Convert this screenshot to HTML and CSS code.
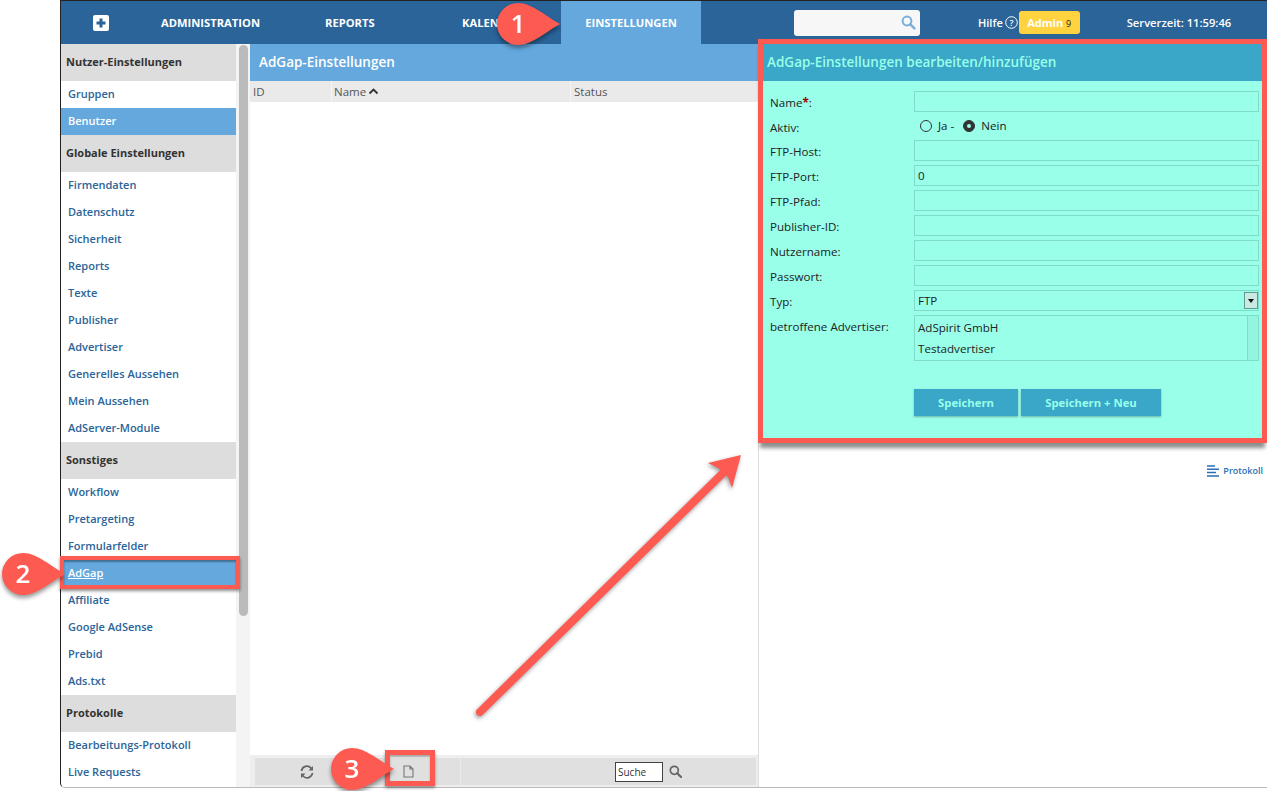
FILE: index.html
```html
<!DOCTYPE html>
<html lang="de">
<head>
  <meta charset="utf-8" />
  <title>AdGap-Einstellungen</title>
  <link rel="stylesheet" href="styles.css">
</head>
<body>
  <div class="window">
    <header class="topnav">
      <div class="nav-add">
        <svg width="16" height="16" viewBox="0 0 16 16"><rect width="16" height="16" rx="2" fill="#fff"/><path d="M8 3.500v9M3.500 8h9" stroke="#2a6499" stroke-width="3"/></svg>
      </div>
      <a class="nav-item nav-admin">ADMINISTRATION</a>
      <a class="nav-item nav-reports">REPORTS</a>
      <a class="nav-item nav-kalender">KALEN</a>
      <a class="nav-item nav-active">EINSTELLUNGEN</a>
      <div class="nav-search">
        <svg width="15" height="15" viewBox="0 0 15 15"><circle cx="6" cy="6" r="4.400" fill="none" stroke="#78aedd" stroke-width="2"/><path d="M9.400 9.400l4 4" stroke="#78aedd" stroke-width="2.400" stroke-linecap="round"/></svg>
      </div>
      <span class="nav-help">Hilfe
        <svg width="13" height="13" viewBox="0 0 13 13"><circle cx="6.500" cy="6.500" r="5.800" fill="none" stroke="#fff"/><text x="6.500" y="9.800" text-anchor="middle" class="help-mark">?</text></svg>
      </span>
      <span class="nav-badge">Admin <small>9</small></span>
      <span class="nav-time">Serverzeit: 11:59:46</span>
    </header>

    <div class="main">
      <aside class="sidebar">
        <nav class="side-list">
          <h4>Nutzer-Einstellungen</h4>
          <a>Gruppen</a>
          <a class="on">Benutzer</a>
          <h4>Globale Einstellungen</h4>
          <a>Firmendaten</a>
          <a>Datenschutz</a>
          <a>Sicherheit</a>
          <a>Reports</a>
          <a>Texte</a>
          <a>Publisher</a>
          <a>Advertiser</a>
          <a>Generelles Aussehen</a>
          <a>Mein Aussehen</a>
          <a>AdServer-Module</a>
          <h4>Sonstiges</h4>
          <a>Workflow</a>
          <a>Pretargeting</a>
          <a>Formularfelder</a>
          <a class="on marked"><u>AdGap</u></a>
          <a>Affiliate</a>
          <a>Google AdSense</a>
          <a>Prebid</a>
          <a>Ads.txt</a>
          <h4>Protokolle</h4>
          <a>Bearbeitungs-Protokoll</a>
          <a>Live Requests</a>
        </nav>
        <div class="side-scroll"><div class="side-thumb"></div></div>
      </aside>

      <section class="listing">
        <h3 class="panel-title">AdGap-Einstellungen</h3>
        <div class="table-head">
          <span class="col-id">ID</span>
          <span class="col-name">Name
            <svg width="11" height="7" viewBox="0 0 11 7"><path d="M1.500 5.500l4-4 4 4" fill="none" stroke="#333" stroke-width="1.800"/></svg>
          </span>
          <span class="col-status">Status</span>
        </div>
        <div class="table-body"></div>
        <div class="toolbar">
          <div class="tool tool-refresh">
            <svg width="14" height="14" viewBox="0 0 14 14"><path d="M1.500 6A5.500 5.500 0 0 1 11 3l1.500 1.500M12.500 8A5.500 5.500 0 0 1 3 11l-1.500-1.500" fill="none" stroke="#666" stroke-width="1.800"/><path d="M13 1v4.500H8.500zM1 13V8.500h4.500z" fill="#666"/></svg>
          </div>
          <div class="tool tool-new">
            <svg width="11" height="13" viewBox="0 0 11 13"><path d="M1 1h6l3 3v8H1zM7 1v3h3" fill="none" stroke="#777" stroke-width="1.100"/></svg>
          </div>
          <div class="tool tool-search">
            <span class="search-box">Suche</span>
            <svg width="13" height="13" viewBox="0 0 13 13"><circle cx="5.300" cy="5.300" r="4" fill="none" stroke="#666" stroke-width="1.700"/><path d="M8.300 8.300l3.700 3.700" stroke="#666" stroke-width="2.200" stroke-linecap="round"/></svg>
          </div>
        </div>
      </section>

      <section class="detail">
        <div class="edit-panel">
          <h3 class="panel-title">AdGap-Einstellungen bearbeiten/hinzufügen</h3>
          <div class="form">
            <label>Name<b>*</b>:</label><span class="field"></span>
            <label>Aktiv:</label>
            <div class="radios">
              <i class="radio"></i><span>Ja -</span>
              <i class="radio checked"></i><span>Nein</span>
            </div>
            <label>FTP-Host:</label><span class="field"></span>
            <label>FTP-Port:</label><span class="field field-port">0</span>
            <label>FTP-Pfad:</label><span class="field"></span>
            <label>Publisher-ID:</label><span class="field"></span>
            <label>Nutzername:</label><span class="field"></span>
            <label>Passwort:</label><span class="field"></span>
            <label>Typ:</label>
            <span class="field field-select">FTP<i class="select-btn"></i></span>
            <label>betroffene Advertiser:</label>
            <div class="multi">
              <div class="multi-items"><span>AdSpirit GmbH</span><span>Testadvertiser</span></div>
              <div class="multi-scroll"></div>
            </div>
          </div>
          <div class="actions">
            <button class="btn btn-save">Speichern</button>
            <button class="btn btn-new">Speichern + Neu</button>
          </div>
        </div>
        <a class="protokoll">
          <svg width="13" height="12" viewBox="0 0 13 12"><path d="M0 1h8M0 4.300h12M0 7.600h9M0 11h12" stroke="#2a6fb5" stroke-width="1.500"/></svg>
          Protokoll
        </a>
      </section>
    </div>
  </div>

  <!-- annotations over the screenshot -->
  <div class="tool-mark"></div>
  <div class="callout callout-1">
    <svg width="64" height="42" viewBox="0 0 64 42"><path d="M21 0C35 0 50 14 63 21 50 28 35 42 21 42A21 21 0 0 1 21 0z" fill="#fd5a52"/></svg>
    <span>1</span>
  </div>
  <div class="callout callout-2">
    <svg width="64" height="42" viewBox="0 0 64 42"><path d="M21 0C35 0 50 14 63 21 50 28 35 42 21 42A21 21 0 0 1 21 0z" fill="#fd5a52"/></svg>
    <span>2</span>
  </div>
  <div class="callout callout-3">
    <svg width="64" height="42" viewBox="0 0 64 42"><path d="M21 0C35 0 50 14 63 21 50 28 35 42 21 42A21 21 0 0 1 21 0z" fill="#fd5a52"/></svg>
    <span>3</span>
  </div>
  <svg class="big-arrow" width="290" height="270" viewBox="0 0 290 270">
    <path d="M10 262L253 23" stroke="#fd5a52" stroke-width="8" stroke-linecap="round"/>
    <path d="M271 5L238 13 248 18 258 27 262 38z" fill="#fd5a52"/>
  </svg>
</body>
</html>
```

FILE: styles.css
```css
* { box-sizing: border-box; }
html, body { margin: 0; height: 100%; background: #fff; overflow: hidden; }
body { font-family: "Open Sans", "Liberation Sans", sans-serif; font-size: 12px; color: #333; }
a { display: block; text-decoration: none; }

.window {
  margin-left: 60px; height: 788px; display: flex; flex-direction: column;
  border-left: 1px solid #222; border-top: 1px solid #222;
  border-bottom: 1px solid #bbb; border-bottom-left-radius: 5px;
}

/* top navigation */
.topnav { height: 43px; flex: none; background: #2a6499; color: #fff; display: flex; align-items: center; position: relative; }
.nav-add { width: 100px; padding-left: 32px; display: flex; }
.nav-item { font-size: 11.2px; font-weight: 700; color: #fff; }
.nav-admin { width: 164px; }
.nav-reports { width: 137px; }
.nav-kalender { width: 99px; }
.nav-active { width: 140px; height: 43px; line-height: 43px; text-align: center; background: #65a8de; }
.nav-search { width: 126px; height: 26px; margin-left: 93px; background: #f7f7f7; border-radius: 3px; display: flex; align-items: center; justify-content: flex-end; padding-right: 4px; }
.nav-help { margin-left: 58px; font-size: 11px; font-weight: 600; display: flex; align-items: center; gap: 2px; }
.help-mark { font-size: 9px; fill: #fff; }
.nav-badge { width: 61px; height: 23px; margin-left: 1px; background: #ffd23f; border-radius: 3px; text-align: center; line-height: 23px; font-size: 11px; font-weight: 700; }
.nav-badge small { font-size: 9px; font-weight: 400; color: #222; }
.nav-time { margin-left: 47px; font-size: 11.2px; font-weight: 600; }

.main { flex: 1; display: flex; min-height: 0; }

/* left menu */
.sidebar { width: 189px; flex: none; display: flex; }
.side-list { width: 175px; }
.side-list h4 { margin: 0; height: 37px; line-height: 36px; padding-left: 5px; background: #ddd; font-size: 11px; font-weight: 700; color: #333; }
.side-list a { height: 27px; line-height: 26px; padding-left: 7px; color: #2a6499; font-size: 11px; font-weight: 600; }
.side-list a.on { background: #65a8de; color: #fff; }
.side-scroll { width: 14px; padding: 1px 3px; background: #f4f4f4; }
.side-thumb { height: 571px; width: 9px; background: #bbb; border-radius: 5px; }

/* list column */
.listing { width: 509px; flex: none; display: flex; flex-direction: column; border-right: 1px solid #ddd; }
.panel-title { margin: 0; height: 37px; line-height: 37px; font-size: 13.500px; font-weight: 600; }
.listing .panel-title { background: #65a8de; color: #fff; padding-left: 9px; }
.table-head { height: 21px; line-height: 21px; background: #eaeaea; display: flex; color: #555; font-size: 11.500px; }
.table-head span { padding-left: 3px; }
.col-id { width: 81px; }
.col-name { width: 239px; border-left: 1px solid #f5f5f5; display: flex; align-items: center; gap: 2px; padding-left: 2px !important; }
.col-status { flex: 1; border-left: 1px solid #f5f5f5; }
.table-body { flex: 1; background: #fff; }
.toolbar { height: 32px; background: #eee; display: flex; align-items: stretch; padding: 3px 2px 2px 5px; }
.tool { background: #e0e0e0; display: flex; align-items: center; justify-content: center; border-right: 1px solid #ebebeb; }
.tool-refresh { width: 104px; }
.tool-new { width: 102px; justify-content: center; padding-right: 2px; }
.tool-search { flex: 1; justify-content: flex-start; padding-left: 154px; gap: 6px; border-right: 0; }
.search-box { width: 48px; height: 20px; line-height: 18px; border: 1px solid #444; background: #fff; font-size: 10px; padding-left: 2px; color: #333; }

/* edit column */
.detail { flex: 1; padding: 0 5px 0 4px; position: relative; }
.edit-panel { height: 394px; background: #99ffe9; outline: 5px solid #fd5a52; box-shadow: 0 7px 4px 3px rgba(0,0,0,.45); }
.edit-panel .panel-title { background: #3aa6c8; color: #99ffe9; padding-left: 4px; }
.form { display: grid; grid-template-columns: 144px 345px; grid-template-rows: 21px 20px; grid-auto-rows: 21px; row-gap: 4px; padding: 10px 0 0 7px; color: #222; font-size: 11.600px; }
.form label { line-height: 21px; padding-top: 1px; }
.form label b { color: #900; font-weight: 700; }
.field { display: block; height: 21px; line-height: 19px; border: 1px solid #7fdccb; padding-left: 3px; color: #222; }
.radios { display: flex; align-items: center; gap: 6px; padding: 0 0 1px 5px; }
.radios span { margin-right: 1px; }
.radios span:nth-of-type(1) { margin-right: 2px; }
.radio { width: 12px; height: 12px; border: 1px solid #333; border-radius: 50%; margin-left: 1px; }
.radio.checked { background: #333; position: relative; }
.radio.checked::after { content: ""; position: absolute; left: 3px; top: 3px; width: 4px; height: 4px; border-radius: 50%; background: #99ffe9; }
.field-select { position: relative; }
.select-btn { position: absolute; right: 0; top: 1px; width: 14px; height: 17px; background: #c9e9e2; border: 1px solid #5f9c90; }
.select-btn::after { content: ""; position: absolute; left: 3px; top: 6px; border: 3px solid transparent; border-top: 4px solid #111; }
.multi { height: 46px; grid-row: span 2; border: 1px solid #7fdccb; display: flex; }
.multi-items { flex: 1; padding: 1px 0 0 3px; }
.multi-items span { display: block; height: 21px; line-height: 21px; }
.multi-scroll { width: 11px; border-left: 1px solid #7fdccb; background: #93f5df; }
.actions { display: flex; gap: 3px; padding: 28px 0 0 151px; }
.btn { height: 27px; border: 0; background: #3aa6c8; color: #99ffe9; font-family: inherit; font-size: 11.300px; font-weight: 700; box-shadow: 0 1px 2px rgba(0,0,0,.3); padding: 0; }
.btn-save { width: 104px; }
.btn-new { width: 140px; }
.protokoll { position: absolute; right: 4px; top: 420px; display: flex; align-items: center; gap: 3px; color: #2a6fb5; font-size: 9px; font-weight: 600; }

/* red annotations */
.side-list a.marked { position: relative; }
.side-list a.marked::after { content: ""; position: absolute; left: -1px; top: -4px; right: -4px; bottom: -2px; border: 4px solid #fd5a52; box-shadow: 0 2px 3px rgba(0,0,0,.45), inset 0 2px 2px rgba(0,0,0,.35); }
.tool-mark { position: absolute; left: 385px; top: 750px; width: 50px; height: 36px; border: 5px solid #fd5a52; box-shadow: 0 2px 3px rgba(0,0,0,.4), inset 0 2px 2px rgba(0,0,0,.3); }
.callout { position: absolute; width: 64px; height: 42px; color: #fff; font-family: "Open Sans", sans-serif; font-size: 26px; font-weight: 600; line-height: 41px; filter: drop-shadow(0 3px 2px rgba(0,0,0,.4)); }
.callout svg { display: block; }
.callout span { position: absolute; left: 0; top: 0; width: 42px; text-align: center; }
.callout-1 { left: 497px; top: 3px; }
.callout-2 { left: 2px; top: 553px; }
.callout-3 { left: 331px; top: 748px; }
.big-arrow { position: absolute; left: 470px; top: 450px; filter: drop-shadow(-1px 2px 2px rgba(0,0,0,.4)); }
```
